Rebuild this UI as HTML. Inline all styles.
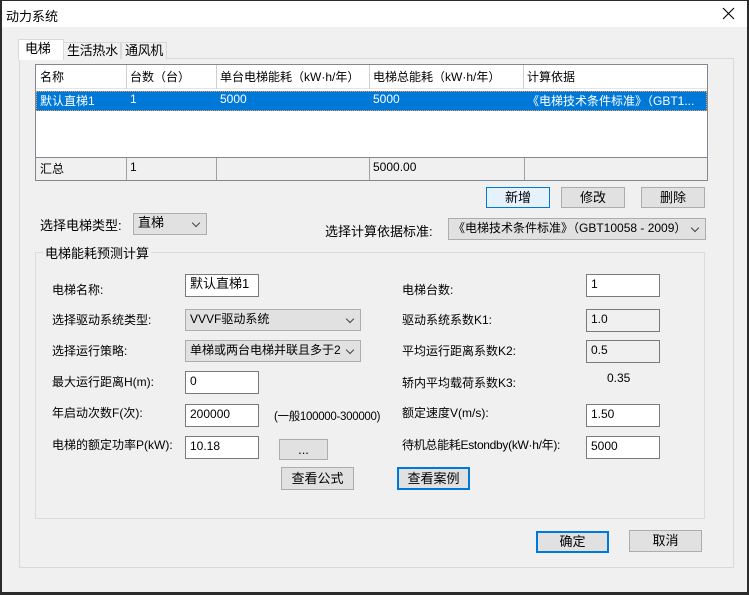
<!DOCTYPE html><html><head><meta charset="utf-8"><style>
*{margin:0;padding:0;box-sizing:border-box}
body{width:749px;height:595px;background:#2b2b2b;font-family:"Liberation Sans","Noto Sans CJK SC",sans-serif;font-size:12px;color:#000;position:relative;overflow:hidden}
.a{position:absolute;white-space:nowrap}
#win{position:absolute;left:2px;top:1px;width:745px;height:591px;background:#f0f0f0}
#title{position:absolute;left:0;top:0;width:745px;height:26px;background:#fff}
.tab{position:absolute;border:1px solid #d9d9d9;border-bottom:none;background:#f0f0f0;font-size:13px;padding-left:3px;line-height:16px;letter-spacing:-0.3px}
.inp{position:absolute;background:#fff;border:1px solid #7a7a7a;height:23px;padding:1px 4px;line-height:16px}
.ro{background:#f0f0f0}
.cb{position:absolute;background:#e1e1e1;border:1px solid #adadad;height:22px;padding:1px 4px;line-height:16px;white-space:nowrap;overflow:hidden}
.cb:after{content:"";position:absolute;z-index:1;right:7px;top:6px;width:5px;height:5px;border-right:1px solid #444;border-bottom:1px solid #444;transform:rotate(45deg)}
.cbw{position:absolute;background:#e1e1e1;right:1px;top:1px;width:18px;height:18px}
.btn{position:absolute;background:#e1e1e1;border:1px solid #adadad;text-align:center;line-height:19px;font-size:13px}
.col{position:absolute;top:0;width:1px;background:#d0d0d0}
</style></head><body>
<div id="win">
<div id="title"><span class="a" style="left:4px;top:5px;font-size:13px">动力系统</span>
<svg class="a" style="left:720px;top:6px" width="13" height="13"><path d="M1 1L12 12M12 1L1 12" stroke="#000" stroke-width="1.1"/></svg></div>
<div class="a" style="left:17px;top:57px;width:715px;height:510px;border:1px solid #d9d9d9;background:#f0f0f0"></div>
<div class="tab" style="left:16px;top:38px;width:46px;height:21px;background:#fff;padding-top:1px;padding-left:6px">电梯</div>
<div class="tab" style="left:61px;top:41px;width:58px;height:17px">生活热水</div>
<div class="tab" style="left:119px;top:41px;width:46px;height:17px">通风机</div>
<div class="a" style="left:33px;top:63px;width:673px;height:117px;border:1px solid #828790;background:#fff">
<div class="a" style="left:0;top:0;width:671px;height:24px;background:#fff;border-bottom:1px solid #e5e5e5"></div>
<div class="col" style="left:90px;height:24px"></div><div class="col" style="left:180px;height:24px"></div><div class="col" style="left:333px;height:24px"></div><div class="col" style="left:487px;height:24px"></div>
<span class="a" style="left:4px;top:3px">名称</span><span class="a" style="left:94px;top:3px">台数（台）</span><span class="a" style="left:184px;top:3px">单台电梯能耗（kW·h/年）</span><span class="a" style="left:337px;top:3px">电梯总能耗（kW·h/年）</span><span class="a" style="left:491px;top:3px">计算依据</span>
<div class="a" style="left:0;top:26px;width:671px;height:20px;background:#0078d7;color:#fff;outline:1px dotted #f0a050;outline-offset:-1px">
<span class="a" style="left:4px;top:1px">默认直梯1</span><span class="a" style="left:94px;top:1px">1</span><span class="a" style="left:184px;top:1px">5000</span><span class="a" style="left:337px;top:1px">5000</span><span class="a" style="left:491px;top:1px">《电梯技术条件标准》（GBT1...</span></div>
<div class="a" style="left:-1px;top:92px;width:673px;height:24px;background:#f0f0f0;border:1px solid #828790">
<div class="col" style="left:90px;height:22px;background:#a0a0a0"></div><div class="col" style="left:180px;height:22px;background:#a0a0a0"></div><div class="col" style="left:333px;height:22px;background:#a0a0a0"></div><div class="col" style="left:488px;height:22px;background:#a0a0a0"></div>
<span class="a" style="left:4px;top:2px">汇总</span><span class="a" style="left:94px;top:2px">1</span><span class="a" style="left:337px;top:2px">5000.00</span></div>
</div>
<div class="btn" style="left:484px;top:186px;width:64px;height:21px;border-color:#0078d7;background:#e5f1fb">新增</div>
<div class="btn" style="left:559px;top:186px;width:64px;height:21px">修改</div>
<div class="btn" style="left:639px;top:186px;width:64px;height:21px">删除</div>
<span class="a" style="left:38px;top:214px;font-size:13px">选择电梯类型:</span>
<div class="cb" style="left:131px;top:212px;width:74px;font-size:13px">直梯</div>
<span class="a" style="left:323px;top:220px;font-size:13px">选择计算依据标准:</span>
<div class="cb" style="left:446px;top:217px;width:258px">《电梯技术条件标准》（GBT10058 - 2009）</div>
<div class="a" style="left:33px;top:251px;width:670px;height:267px;border:1px solid #dcdcdc"></div>
<span class="a" style="left:41px;top:242px;background:#f0f0f0;padding:0 2px;font-size:13px">电梯能耗预测计算</span>
<span class="a" style="left:50px;top:280px">电梯名称:</span><div class="inp" style="left:183px;top:273px;width:74px;font-size:13px">默认直梯1</div>
<span class="a" style="left:400px;top:280px">电梯台数:</span><div class="inp" style="left:584px;top:273px;width:74px">1</div>
<span class="a" style="left:50px;top:310px">选择驱动系统类型:</span><div class="cb" style="left:183px;top:308px;width:176px">VVVF驱动系统</div>
<span class="a" style="left:400px;top:310px">驱动系统系数K1:</span><div class="inp ro" style="left:584px;top:308px;width:74px">1.0</div>
<span class="a" style="left:50px;top:341px">选择运行策略:</span><div class="cb" style="left:183px;top:339px;width:176px">单梯或两台电梯并联且多于2层<div class="cbw"></div></div>
<span class="a" style="left:400px;top:341px">平均运行距离系数K2:</span><div class="inp ro" style="left:584px;top:339px;width:74px">0.5</div>
<span class="a" style="left:50px;top:372px">最大运行距离H(m):</span><div class="inp" style="left:183px;top:370px;width:74px">0</div>
<span class="a" style="left:400px;top:373px">轿内平均载荷系数K3:</span><span class="a" style="left:605px;top:370px">0.35</span>
<span class="a" style="left:50px;top:403px">年启动次数F(次):</span><div class="inp" style="left:183px;top:403px;width:74px">200000</div>
<span class="a" style="left:272px;top:407px;font-size:11.5px;letter-spacing:-0.3px">(一般100000-300000)</span>
<span class="a" style="left:400px;top:403px">额定速度V(m/s):</span><div class="inp" style="left:584px;top:403px;width:74px">1.50</div>
<span class="a" style="left:50px;top:435px">电梯的额定功率P(kW):</span><div class="inp" style="left:183px;top:435px;width:74px">10.18</div>
<div class="btn" style="left:277px;top:438px;width:49px;height:21px">...</div>
<span class="a" style="left:400px;top:435px;letter-spacing:-0.3px">待机总能耗Estondby(kW·h/年):</span><div class="inp" style="left:584px;top:435px;width:74px">5000</div>
<div class="btn" style="left:279px;top:466px;width:73px;height:23px;line-height:21px">查看公式</div>
<div class="btn" style="left:395px;top:466px;width:73px;height:23px;line-height:19px;border:2px solid #0078d7">查看案例</div>
<div class="btn" style="left:534px;top:530px;width:73px;height:22px;line-height:18px;border:2px solid #0078d7">确定</div>
<div class="btn" style="left:627px;top:529px;width:73px;height:22px">取消</div>
</div>
</body></html>
